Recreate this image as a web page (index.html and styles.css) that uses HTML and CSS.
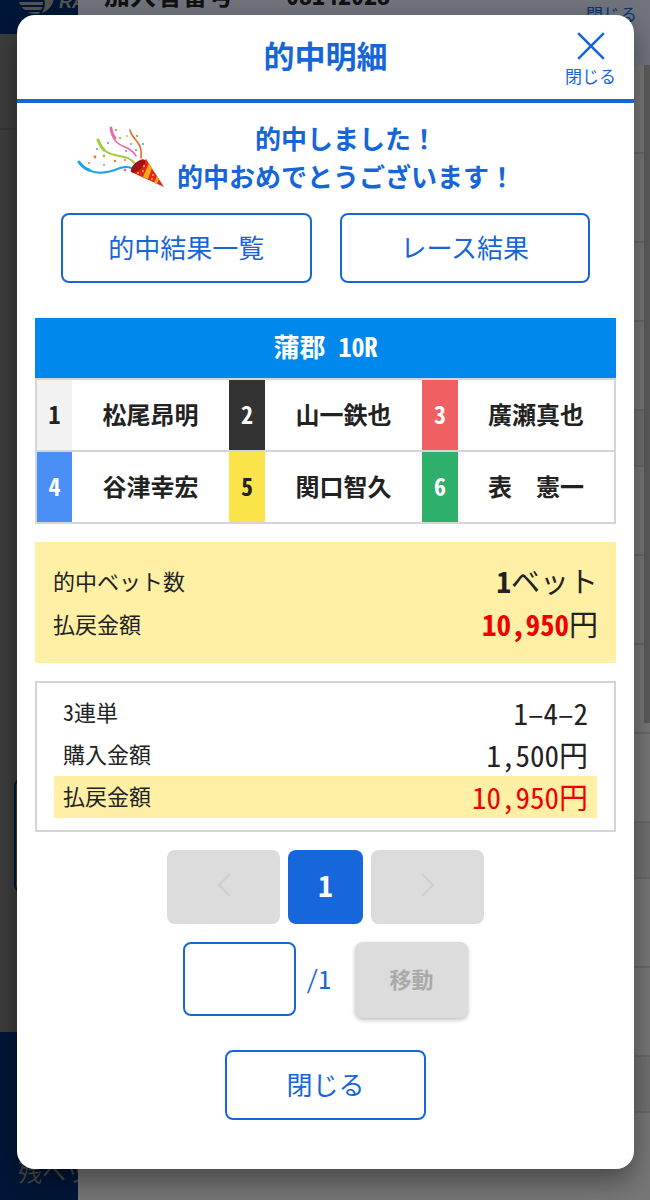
FILE: index.html
```html
<!DOCTYPE html>
<html lang="ja">
<head>
  <meta charset="UTF-8">
  <meta name="viewport" content="width=device-width, initial-scale=1.0">
  <title>的中明細</title>
  <link rel="stylesheet" href="styles.css">
</head>
<body>

  <!-- Page behind the dialog -->
  <div class="page" aria-hidden="true">
    <div class="side">
      <div class="side-top">
        <svg class="logo" viewBox="0 0 78 34">
          <circle cx="36" cy="-4" r="18" fill="#55534f"/>
          <path d="M18 1h25M20 6h23M25 11h16" stroke="#001638" stroke-width="2"/>
          <path d="M40-4q8 6 0 18" fill="none" stroke="#001638" stroke-width="2"/>
        </svg>
        <span class="logo-text">RA</span>
      </div>
      <div class="side-mid">
        <div class="side-tab"></div>
        <div class="side-box"></div>
      </div>
      <div class="side-bottom">残ベット</div>
    </div>
    <div class="drawer">
      <div class="drawer-head">
        <span>加入者番号</span>
        <span class="member-no">08142028</span>
        <span class="drawer-close">閉じる</span>
      </div>
      <div class="line"></div>
      <div class="line"></div>
      <div class="line low"></div>
      <div class="line"></div>
      <div class="line head"></div>
      <div class="line"></div>
      <div class="line"></div>
      <div class="line"></div>
      <div class="line"></div>
      <div class="line head"></div>
      <div class="line"></div>
      <div class="line"></div>
      <div class="line head"></div>
      <div class="line last"></div>
      <div class="scrollbar"></div>
    </div>
  </div>

  <div class="overlay">
    <div class="modal" role="dialog" aria-labelledby="modalTitle">
      <div class="modal-header">
        <h1 id="modalTitle">的中明細</h1>
        <button class="close-icon" type="button">
          <svg viewBox="0 0 28 28"><path d="M2 2l24 24M26 2L2 26" fill="none" stroke="#1666d9" stroke-width="2.4"/></svg>
          <span>閉じる</span>
        </button>
      </div>

      <div class="modal-body">
        <div class="congrats">
          <svg class="cracker" viewBox="0 0 90 66">
            <g fill="none" stroke-linecap="round">
              <path d="M2 37C13 52 31 48 43 43Q50 41 54 43" stroke="#1ba3e2" stroke-width="2"/>
              <path d="M2 37Q6 43 12 45" stroke="#1ba3e2" stroke-width="3"/>
              <path d="M21 15C26 31 40 30 47 32Q55 34 58 39" stroke="#a6ca3d" stroke-width="2"/>
              <path d="M21 15Q23 21 27 25" stroke="#a6ca3d" stroke-width="3"/>
              <path d="M34 3C35 20 47 21 52 24Q57 27 59 31" stroke="#e76bab" stroke-width="1.6"/>
              <path d="M34 3Q35 10 38 13" stroke="#e76bab" stroke-width="2.8"/>
              <path d="M53 5C55 15 66 16 64 33" stroke="#e66a27" stroke-width="1.6"/>
            </g>
            <path d="M54 47L69 34L87 62Z" fill="#e4251e"/>
            <path d="M66 52L72 38L75 43L71 54ZM77 58L80 51L82 54L80 59Z" fill="#f7a81b"/>
            <ellipse cx="61" cy="41" rx="9" ry="4" transform="rotate(-42 61 41)" fill="#9f1218"/>
            <g fill="#f9c62d">
              <circle cx="67" cy="41" r="1"/><circle cx="61" cy="48" r="1"/><circle cx="66" cy="46" r="1"/><circle cx="76" cy="50" r="1"/><circle cx="75" cy="54" r="1"/>
            </g>
            <g fill="#4a96e8">
              <circle cx="31" cy="18" r="1"/><circle cx="20" cy="24" r="1"/><circle cx="59" cy="25" r="1"/><circle cx="66" cy="19" r="1"/><circle cx="49" cy="26" r="1"/>
            </g>
            <g fill="#e77435">
              <circle cx="18" cy="32" r="1.4"/><circle cx="39" cy="5" r="1"/><circle cx="60" cy="11" r="1"/><circle cx="38" cy="36" r="1.2"/><circle cx="12" cy="38" r="1"/><circle cx="48" cy="35" r="1"/>
            </g>
            <g fill="#a6ca3d">
              <circle cx="27" cy="31" r="1.4"/><circle cx="43" cy="13" r="1.2"/><circle cx="50" cy="11" r="1"/>
            </g>
            <g fill="#e76bab">
              <circle cx="48" cy="45" r="1.4"/><circle cx="27" cy="40" r="1"/><circle cx="54" cy="19" r="1"/>
            </g>
          </svg>
          <p>的中しました！<br>的中おめでとうございます！</p>
        </div>

        <div class="links">
          <button class="btn" type="button">的中結果一覧</button>
          <button class="btn" type="button">レース結果</button>
        </div>

        <table class="race">
          <caption>蒲郡 10R</caption>
          <tbody>
            <tr>
              <th class="w1">1</th><td>松尾昂明</td>
              <th class="w2">2</th><td>山一鉄也</td>
              <th class="w3">3</th><td>廣瀬真也</td>
            </tr>
            <tr>
              <th class="w4">4</th><td>谷津幸宏</td>
              <th class="w5">5</th><td>関口智久</td>
              <th class="w6">6</th><td>表　憲一</td>
            </tr>
          </tbody>
        </table>

        <dl class="total">
          <div><dt>的中ベット数</dt><dd><b>1</b>ベット</dd></div>
          <div><dt>払戻金額</dt><dd><b class="red">10,950</b>円</dd></div>
        </dl>

        <dl class="bet">
          <div><dt>3連単</dt><dd>1–4–2</dd></div>
          <div><dt>購入金額</dt><dd>1,500円</dd></div>
          <div class="pay"><dt>払戻金額</dt><dd class="red">10,950円</dd></div>
        </dl>

        <div class="pager">
          <button class="page-btn" type="button" aria-label="前へ" disabled>
            <svg viewBox="0 0 14 24"><path d="M13 1L2 12l11 11" fill="none" stroke="#cecece" stroke-width="2"/></svg>
          </button>
          <button class="page-btn current" type="button">1</button>
          <button class="page-btn" type="button" aria-label="次へ" disabled>
            <svg viewBox="0 0 14 24"><path d="M1 1l11 11L1 23" fill="none" stroke="#cecece" stroke-width="2"/></svg>
          </button>
        </div>

        <div class="jump">
          <input type="text" id="pageNo" aria-label="ページ番号">
          <label for="pageNo">/1</label>
          <button class="move" type="button" disabled>移動</button>
        </div>

        <button class="btn btn-close" type="button">閉じる</button>
      </div>
    </div>
  </div>

</body>
</html>
```

FILE: styles.css
```css
* {
  box-sizing: border-box;
}

body {
  margin: 0;
  font-family: "Noto Sans CJK JP", sans-serif;
  color: #222;
  background-color: #777;
}

button, input {
  font-family: inherit;
  padding: 0;
}

h1, p, dl, dd {
  margin: 0;
}

/* Half-width digits */
.member-no, .race caption, .race th, .total dd, .bet, .page-btn, .jump {
  font-feature-settings: "hwid";
}

/* Page behind */
.page {
  display: flex;
  height: 100vh;
  overflow: hidden;
}

.side {
  display: flex;
  flex-direction: column;
  width: 78px;
  background-color: #3d3d3d;
}

.side-top {
  position: relative;
  height: 34px;
  background-color: #001638;
  overflow: hidden;
}

.logo {
  display: block;
  width: 78px;
  height: 34px;
}

.logo-text {
  position: absolute;
  left: 59px;
  top: -9px;
  font: italic bold 18px/22px "Liberation Sans", sans-serif;
  color: #55534f;
}

.side-mid {
  flex: 1;
}

.side-tab {
  height: 96px;
  border-bottom: 2px solid #343434;
}

.side-box {
  height: 115px;
  margin-top: 648px;
  margin-left: 14px;
  border: 2px solid #001638;
  border-radius: 8px;
}

.side-bottom {
  height: 168px;
  padding: 122px 0 0 18px;
  font-size: 24px;
  line-height: 34px;
  white-space: nowrap;
  overflow: hidden;
  color: #484848;
  background-color: #001638;
}

.drawer {
  position: relative;
  flex: 1;
  overflow: hidden;
}

.drawer-head {
  display: flex;
  height: 65px;
  padding-left: 26px;
  font-size: 26px;
  font-weight: bold;
  line-height: 1;
  color: #111;
  background-color: #70737c;
}

.drawer-head span {
  margin-top: -19px;
}

.drawer-head .member-no {
  margin-left: 52px;
}

.drawer-head .drawer-close {
  margin: 5px 13px 0 auto;
  font-size: 17px;
  font-weight: normal;
  color: #0b3370;
}

.line {
  height: 89px;
  border-bottom: 2px solid #696969;
}

.line.low {
  height: 79px;
}

.line.head {
  height: 56px;
  background-color: #707070;
}

.line.last {
  border: 0;
}

.scrollbar {
  position: absolute;
  right: 0;
  top: 65px;
  width: 6px;
  height: 658px;
  background-color: #5b5b5b;
}

/* Dialog */
.overlay {
  position: absolute;
  top: 0;
  left: 0;
  right: 0;
  padding: 15px 16px 31px 17px;
}

.modal {
  background-color: #fff;
  border-radius: 18px;
  box-shadow: 0 12px 28px rgba(0, 0, 0, 0.4);
}

.modal-header {
  position: relative;
  height: 88px;
  border-bottom: 4px solid #1666d9;
}

.modal-header h1 {
  font-size: 31px;
  line-height: 80px;
  text-align: center;
  color: #1666d9;
}

.close-icon {
  position: absolute;
  top: 16px;
  right: 18px;
  display: flex;
  flex-direction: column;
  align-items: center;
  gap: 3px;
  border: none;
  background: none;
  font-size: 17px;
  line-height: 24px;
  color: #1666d9;
}

.close-icon svg {
  width: 30px;
  height: 30px;
}

.modal-body {
  padding: 16px 18px 49px;
}

.congrats {
  display: flex;
  gap: 10px;
  padding-left: 42px;
}

.cracker {
  width: 90px;
  height: 66px;
  margin-top: 6px;
}

.congrats p {
  font-size: 26px;
  font-weight: bold;
  line-height: 38px;
  text-align: center;
  color: #1666d9;
}

.links {
  display: flex;
  gap: 28px;
  margin: 18px 26px 35px;
}

.btn {
  flex: 1;
  height: 70px;
  padding-bottom: 4px;
  border: 2px solid #1666d9;
  border-radius: 8px;
  font-size: 26px;
  color: #1666d9;
  background-color: #fff;
}

.race {
  width: 100%;
  table-layout: fixed;
  border-collapse: collapse;
  border: 2px solid #d5d5d5;
  font-size: 24px;
  font-weight: bold;
  text-align: center;
}

.race caption {
  padding-bottom: 4px;
  font-size: 26px;
  line-height: 56px;
  color: #fff;
  background-color: #0088ec;
}

.race tr {
  height: 72px;
  border-bottom: 2px solid #d5d5d5;
}

.race th {
  width: 36px;
}

.race th, .race td {
  padding: 0 0 4px;
}

.w1 {
  background-color: #f2f2f2;
}

.w2 {
  color: #fff;
  background-color: #333;
}

.w3 {
  color: #fff;
  background-color: #f06062;
}

.w4 {
  color: #fff;
  background-color: #498ff5;
}

.w5 {
  background-color: #fbe34a;
}

.w6 {
  color: #fff;
  background-color: #2eb06c;
}

.total div, .bet div {
  display: flex;
  justify-content: space-between;
}

.total dt, .bet dt {
  font-size: 22px;
}

.total dd, .bet dd {
  font-size: 29px;
}

.total {
  margin: 18px 0;
  padding: 17px 18px 18px;
  line-height: 43px;
  background-color: #fff0a5;
}

.bet {
  padding: 9px 17px 12px;
  border: 2px solid #d5d5d5;
  line-height: 42px;
}

.bet div {
  padding: 0 9px;
}

.bet dt {
  line-height: 38px;
}

.bet dd {
  line-height: 40px;
  padding-bottom: 2px;
}

.bet .pay {
  background-color: #fff0a5;
}

.red {
  color: #f00000;
}

.pager {
  display: flex;
  justify-content: center;
  gap: 8px;
  margin: 18px 0;
}

.page-btn {
  width: 113px;
  height: 74px;
  border: none;
  border-radius: 8px;
  background-color: #dcdcdc;
}

.page-btn svg {
  width: 14px;
  height: 24px;
}

.page-btn.current {
  width: 75px;
  padding-bottom: 6px;
  font-size: 29px;
  font-weight: bold;
  color: #fff;
  background-color: #1767dc;
}

.jump {
  display: flex;
  justify-content: center;
  align-items: flex-start;
  margin-bottom: 32px;
}

.jump input {
  width: 113px;
  height: 74px;
  border: 2px solid #1666d9;
  border-radius: 8px;
  font-size: 26px;
  text-align: center;
}

.jump label {
  margin: 0 24px 0 10px;
  font-size: 25px;
  line-height: 72px;
  color: #1666d9;
}

.move {
  width: 113px;
  height: 76px;
  padding-bottom: 4px;
  border: none;
  border-radius: 8px;
  font-size: 22px;
  font-weight: bold;
  color: #aaa;
  background-color: #dcdcdc;
  box-shadow: 0 2px 4px rgba(0, 0, 0, 0.25);
}

.btn-close {
  display: block;
  width: 201px;
  margin: 0 auto;
}
```
